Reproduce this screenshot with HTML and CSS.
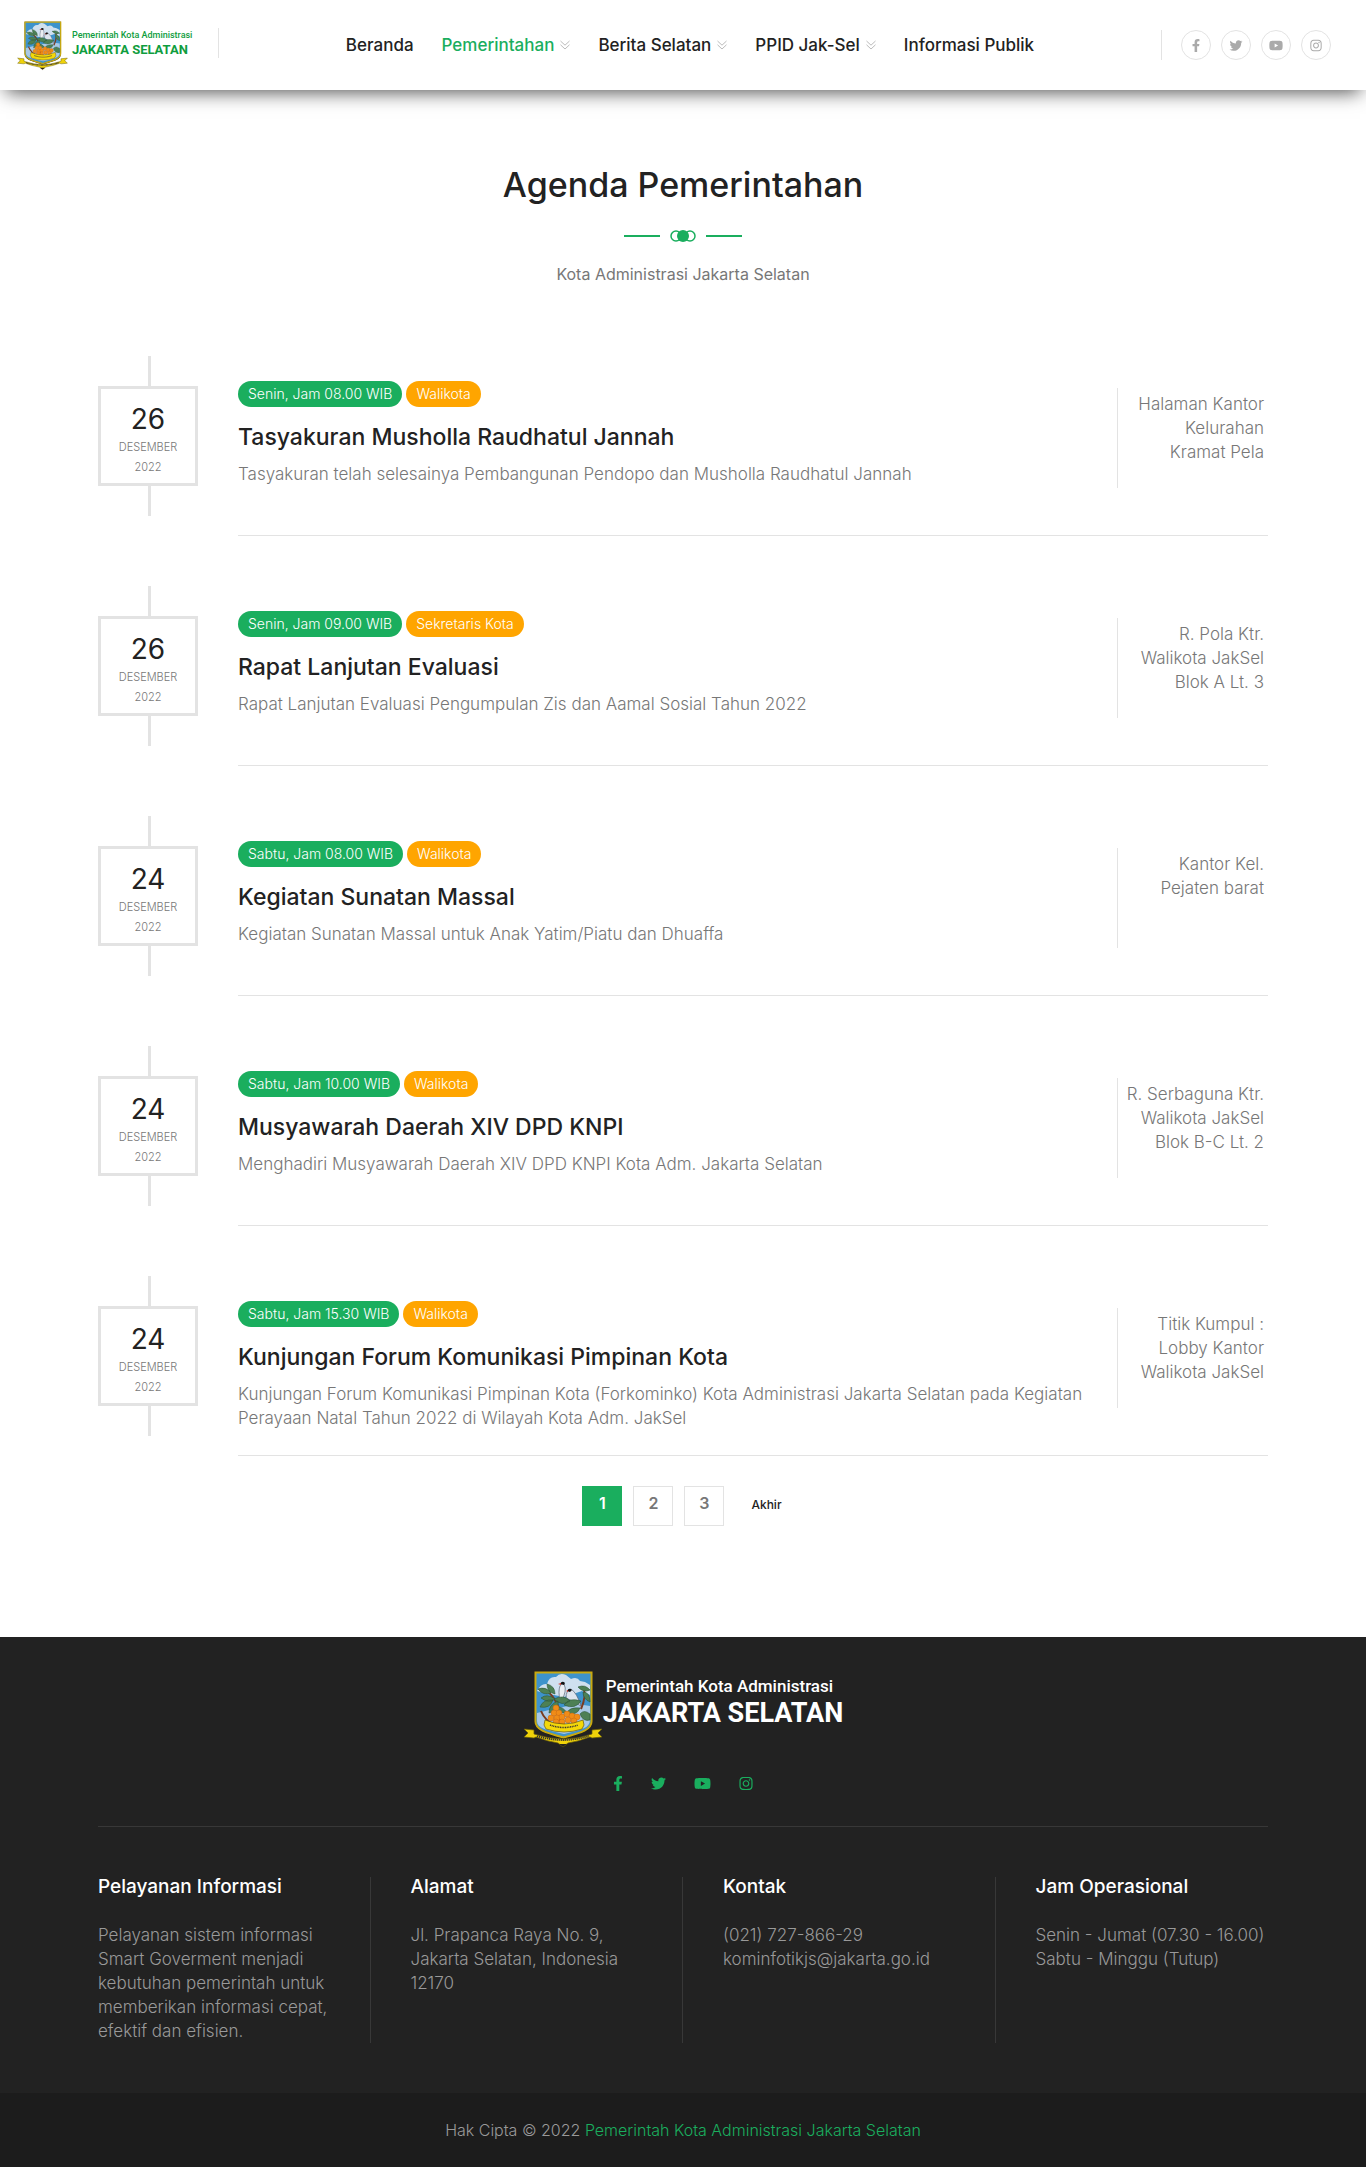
FILE: index.html
```html
<!DOCTYPE html>
<html lang="id">
<head>
<meta charset="utf-8">
<meta name="viewport" content="width=device-width, initial-scale=1">
<title>Agenda Pemerintahan - Jakarta Selatan</title>
<link rel="stylesheet" href="styles.css">
</head>
<body>
<svg class="sprite" aria-hidden="true">
  <symbol id="facebook" viewBox="0 0 320 512"><path d="M279.14 288l14.22-92.66h-88.91v-60.13c0-25.35 12.42-50.06 52.24-50.06h40.42V6.26S260.43 0 225.36 0c-73.22 0-121.08 44.38-121.08 124.72v70.62H22.89V288h81.39v224h100.17V288z"/></symbol>
  <symbol id="twitter" viewBox="0 0 512 512"><path d="M459.37 151.716c.325 4.548.325 9.097.325 13.645 0 138.72-105.583 298.558-298.558 298.558-59.452 0-114.68-17.219-161.137-47.106 8.447.974 16.568 1.299 25.34 1.299 49.055 0 94.213-16.568 130.274-44.832-46.132-.975-84.792-31.188-98.112-72.772 6.498.974 12.995 1.624 19.818 1.624 9.421 0 18.843-1.3 27.614-3.573-48.081-9.747-84.143-51.98-84.143-102.985v-1.299c13.969 7.797 30.214 12.67 47.431 13.319-28.264-18.843-46.781-51.005-46.781-87.391 0-19.492 5.197-37.36 14.294-52.954 51.655 63.675 129.3 105.258 216.365 109.807-1.624-7.797-2.599-15.918-2.599-24.04 0-57.828 46.782-104.934 104.934-104.934 30.213 0 57.502 12.67 76.67 33.137 23.715-4.548 46.456-13.32 66.599-25.34-7.798 24.366-24.366 44.833-46.132 57.827 21.117-2.273 41.584-8.122 60.426-16.243-14.292 20.791-32.161 39.308-52.628 54.253z"/></symbol>
  <symbol id="youtube" viewBox="0 0 576 512"><path d="M549.655 124.083c-6.281-23.65-24.787-42.276-48.284-48.597C458.781 64 288 64 288 64S117.22 64 74.629 75.486c-23.497 6.322-42.003 24.947-48.284 48.597-11.412 42.867-11.412 132.305-11.412 132.305s0 89.438 11.412 132.305c6.281 23.65 24.787 41.5 48.284 47.821C117.22 448 288 448 288 448s170.78 0 213.371-11.486c23.497-6.321 42.003-24.171 48.284-47.821 11.412-42.867 11.412-132.305 11.412-132.305s0-89.438-11.412-132.305zm-317.51 213.508V175.185l142.739 81.205-142.739 81.201z"/></symbol>
  <symbol id="instagram" viewBox="0 0 448 512"><path d="M224.1 141c-63.6 0-114.9 51.3-114.9 114.9s51.3 114.9 114.9 114.9S339 319.5 339 255.9 287.7 141 224.1 141zm0 189.6c-41.1 0-74.7-33.5-74.7-74.7s33.5-74.7 74.7-74.7 74.7 33.5 74.7 74.7-33.6 74.7-74.7 74.7zm146.4-194.3c0 14.9-12 26.8-26.8 26.8-14.9 0-26.8-12-26.8-26.8s12-26.8 26.8-26.8 26.8 12 26.8 26.8zm76.1 27.2c-1.7-35.9-9.9-67.7-36.2-93.9-26.2-26.2-58-34.4-93.9-36.2-37-2.1-147.9-2.1-184.9 0-35.8 1.7-67.6 9.9-93.9 36.1s-34.4 58-36.2 93.9c-2.1 37-2.1 147.9 0 184.9 1.7 35.9 9.9 67.7 36.2 93.9s58 34.4 93.9 36.2c37 2.1 147.9 2.1 184.9 0 35.9-1.7 67.7-9.9 93.9-36.2 26.2-26.2 34.4-58 36.2-93.9 2.1-37 2.1-147.8 0-184.8zM398.8 388c-7.8 19.6-22.9 34.7-42.6 42.6-29.5 11.7-99.5 9-132.1 9s-102.7 2.6-132.1-9c-19.6-7.8-34.7-22.9-42.6-42.6-11.7-29.5-9-99.5-9-132.1s-2.6-102.7 9-132.1c7.8-19.6 22.9-34.7 42.6-42.6 29.5-11.7 99.5-9 132.1-9s102.7-2.6 132.1 9c19.6 7.8 34.7 22.9 42.6 42.6 11.7 29.5 9 99.5 9 132.1s2.7 102.7-9 132.1z"/></symbol>
  <symbol id="chevrons" viewBox="0 0 10 10"><path d="M.5 1L5 5.200 9.500 1M.5 4.800L5 9l4.500-4.200" fill="none" stroke="currentColor"/></symbol>
  <symbol id="emblem" viewBox="0 0 80 78">
    <path d="M12 1h57v50c0 9-9 11-28.500 17C21 62 12 60 12 51z" fill="#111"/>
    <path d="M12.500 1.500h56v49c0 8-9 11-28 16-19-5-28-8-28-16z" fill="#3d93cc" stroke="#c9a90f" stroke-width="2"/>
    <path d="M14 20q4-8 10-7 2-8 9-7 4-5 10-2l5 4q6-3 9 2l5 1 5 3v10l-8-4-18 6-20-4z" fill="#cfe0ef"/>
    <path d="M14 42l12-3 28-6 13 2v14c0 8-9 10-26 14-18-4-27-6-27-13z" fill="#a9c9e6"/>
    <path d="M36 60q2-12 0-24M18 40q4 10 14 14M60 16q4 8-2 22M24 20q8 6 12 18" fill="none" stroke="#7a3b20" stroke-width="2"/>
    <path d="M37 30q-2-10 0-15 2-4 4-2 2 4 1 8l-3 10z" fill="#e9edf2" stroke="#576274" stroke-width=".7"/>
    <path d="M43 27q0-8 5-9 6 4 10 17-8-5-15-8z" fill="#dde4ee" stroke="#576274" stroke-width=".7"/>
    <g fill="#4d8055" stroke="#2d5738" stroke-width=".6">
      <path d="M15 18q8-3 13 4-8 3-13-4zM24 13q8 2 8 10-8-2-8-10zM17 36q3-8 13-7-3 9-13 7zM18 27q6-5 14 1-6 5-14-1zM31 28q10-5 16 2-8 6-16-2zM26 42q0-9 9-12 2 9-9 12zM41 34q5-8 17-4-6 9-17 4zM44 42q2-6 13-5-3 8-13 5zM55 16q7-3 12 3-7 3-12-3zM60 21q7 0 7 10-7-3-7-10zM33 36q7-1 11 6-8 1-11-6zM57 43q4-5 10 0v6q-7 2-10-6z"/>
    </g>
    <path d="M37 13q2-4 5-1l-1 2zM44 20q2-4 5-1l-2 2z" fill="#111"/>
    <path d="M38 12l-3 1 3 1zM45 19l-2 1 2 1z" fill="#d8382c"/>
    <g fill="#f08c17" stroke="#c96812" stroke-width=".5"><circle cx="33" cy="37" r="3"/><circle cx="31" cy="42" r="3"/><circle cx="36" cy="42" r="3"/><circle cx="28" cy="47" r="3"/><circle cx="34" cy="47" r="3"/><circle cx="39" cy="46" r="3"/><circle cx="44" cy="43" r="3"/><circle cx="49" cy="45" r="3"/><circle cx="54" cy="46" r="3"/><circle cx="45" cy="49" r="3"/><circle cx="51" cy="50" r="3"/><circle cx="39" cy="51" r="3"/><circle cx="33" cy="51" r="3"/></g>
    <path d="M22 49q19 8 38 0l1 5-2 4q-18 6-36 0l-2-4z" fill="#f3d80a" stroke="#655a08" stroke-width=".7"/>
    <path d="M27 54q14 5 28 0" fill="none" stroke="#333" stroke-dasharray="1 .7" stroke-width="1.500"/>
    <path d="M1 58l10 1v4q30 10 58 0v-4l10-1-4 4 4 4-10 1-2-1q-10 4-22 6l-5 4-5-4q-12-2-22-6l-2 1-10-1 4-4z" fill="#efd20a" stroke="#655a08" stroke-width=".7"/>
    <path d="M14 65q26 8 52 0" fill="none" stroke="#333" stroke-dasharray="1.300 .7" stroke-width="1.800"/>
    <path d="M36 73h8l-4 3z" fill="#222"/>
  </symbol>
</svg>

<header class="site-header">
  <a class="brand" href="#">
    <svg class="brand-emblem" aria-hidden="true"><use href="#emblem"/></svg>
    <span class="brand-text"><span class="brand-small">Pemerintah Kota Administrasi</span><span class="brand-big">JAKARTA SELATAN</span></span>
  </a>
  <nav class="main-nav" aria-label="Utama">
    <a href="#">Beranda</a>
    <a class="active" href="#">Pemerintahan<svg><use href="#chevrons"/></svg></a>
    <a href="#">Berita Selatan<svg><use href="#chevrons"/></svg></a>
    <a href="#">PPID Jak-Sel<svg><use href="#chevrons"/></svg></a>
    <a href="#">Informasi Publik</a>
  </nav>
  <div class="header-social">
    <a href="#" aria-label="Facebook"><svg><use href="#facebook"/></svg></a>
    <a href="#" aria-label="Twitter"><svg><use href="#twitter"/></svg></a>
    <a href="#" aria-label="YouTube"><svg><use href="#youtube"/></svg></a>
    <a href="#" aria-label="Instagram"><svg><use href="#instagram"/></svg></a>
  </div>
</header>

<main class="container">
  <section class="heading">
    <h1>Agenda Pemerintahan</h1>
    <svg class="ornament" viewBox="0 0 118 12" aria-hidden="true">
      <path d="M0 6h36M82 6h36" stroke="currentColor" stroke-width="2"/>
      <circle cx="52" cy="6" r="5" fill="none" stroke="currentColor" stroke-width="1.500"/>
      <circle cx="66" cy="6" r="5" fill="none" stroke="currentColor" stroke-width="1.500"/>
      <circle cx="59" cy="6" r="6" fill="currentColor"/>
    </svg>
    <p>Kota Administrasi Jakarta Selatan</p>
  </section>

  <section class="agenda">
    <article class="event">
      <time class="date" datetime="2022-12-26"><span class="date-box"><b>26</b><span>DESEMBER</span><span>2022</span></span></time>
      <div class="event-body">
        <div class="event-info">
          <div class="tags"><span class="tag">Senin, Jam 08.00 WIB</span><span class="tag who">Walikota</span></div>
          <h2>Tasyakuran Musholla Raudhatul Jannah</h2>
          <p>Tasyakuran telah selesainya Pembangunan Pendopo dan Musholla Raudhatul Jannah</p>
        </div>
        <p class="place">Halaman Kantor<br>Kelurahan<br>Kramat Pela</p>
      </div>
    </article>
    <article class="event">
      <time class="date" datetime="2022-12-26"><span class="date-box"><b>26</b><span>DESEMBER</span><span>2022</span></span></time>
      <div class="event-body">
        <div class="event-info">
          <div class="tags"><span class="tag">Senin, Jam 09.00 WIB</span><span class="tag who">Sekretaris Kota</span></div>
          <h2>Rapat Lanjutan Evaluasi</h2>
          <p>Rapat Lanjutan Evaluasi Pengumpulan Zis dan Aamal Sosial Tahun 2022</p>
        </div>
        <p class="place">R. Pola Ktr.<br>Walikota JakSel<br>Blok A Lt. 3</p>
      </div>
    </article>
    <article class="event">
      <time class="date" datetime="2022-12-24"><span class="date-box"><b>24</b><span>DESEMBER</span><span>2022</span></span></time>
      <div class="event-body">
        <div class="event-info">
          <div class="tags"><span class="tag">Sabtu, Jam 08.00 WIB</span><span class="tag who">Walikota</span></div>
          <h2>Kegiatan Sunatan Massal</h2>
          <p>Kegiatan Sunatan Massal untuk Anak Yatim/Piatu dan Dhuaffa</p>
        </div>
        <p class="place">Kantor Kel.<br>Pejaten barat</p>
      </div>
    </article>
    <article class="event">
      <time class="date" datetime="2022-12-24"><span class="date-box"><b>24</b><span>DESEMBER</span><span>2022</span></span></time>
      <div class="event-body">
        <div class="event-info">
          <div class="tags"><span class="tag">Sabtu, Jam 10.00 WIB</span><span class="tag who">Walikota</span></div>
          <h2>Musyawarah Daerah XIV DPD KNPI</h2>
          <p>Menghadiri Musyawarah Daerah XIV DPD KNPI Kota Adm. Jakarta Selatan</p>
        </div>
        <p class="place">R. Serbaguna Ktr.<br>Walikota JakSel<br>Blok B-C Lt. 2</p>
      </div>
    </article>
    <article class="event">
      <time class="date" datetime="2022-12-24"><span class="date-box"><b>24</b><span>DESEMBER</span><span>2022</span></span></time>
      <div class="event-body">
        <div class="event-info">
          <div class="tags"><span class="tag">Sabtu, Jam 15.30 WIB</span><span class="tag who">Walikota</span></div>
          <h2>Kunjungan Forum Komunikasi Pimpinan Kota</h2>
          <p>Kunjungan Forum Komunikasi Pimpinan Kota (Forkominko) Kota Administrasi Jakarta Selatan pada Kegiatan<br>Perayaan Natal Tahun 2022 di Wilayah Kota Adm. JakSel</p>
        </div>
        <p class="place">Titik Kumpul :<br>Lobby Kantor<br>Walikota JakSel</p>
      </div>
    </article>
  </section>

  <nav class="pagination" aria-label="Halaman">
    <a class="page current" href="#" aria-current="page">1</a>
    <a class="page" href="#">2</a>
    <a class="page" href="#">3</a>
    <a class="last" href="#">Akhir</a>
  </nav>
</main>

<footer class="site-footer">
  <div class="container">
    <div class="footer-top">
      <a class="footer-brand" href="#">
        <svg class="footer-emblem" aria-hidden="true"><use href="#emblem"/></svg>
        <span class="footer-brand-text"><span class="footer-small">Pemerintah Kota Administrasi</span><span class="footer-big">JAKARTA SELATAN</span></span>
      </a>
      <div class="footer-social">
        <a href="#" aria-label="Facebook"><svg class="fb"><use href="#facebook"/></svg></a>
        <a href="#" aria-label="Twitter"><svg class="tw"><use href="#twitter"/></svg></a>
        <a href="#" aria-label="YouTube"><svg class="yt"><use href="#youtube"/></svg></a>
        <a href="#" aria-label="Instagram"><svg class="ig"><use href="#instagram"/></svg></a>
      </div>
    </div>
    <div class="footer-columns">
      <section><h3>Pelayanan Informasi</h3><p>Pelayanan sistem informasi<br>Smart Goverment menjadi<br>kebutuhan pemerintah untuk<br>memberikan informasi cepat,<br>efektif dan efisien.</p></section>
      <section><h3>Alamat</h3><p>Jl. Prapanca Raya No. 9,<br>Jakarta Selatan, Indonesia<br>12170</p></section>
      <section><h3>Kontak</h3><p>(021) 727-866-29<br>kominfotikjs@jakarta.go.id</p></section>
      <section><h3>Jam Operasional</h3><p>Senin - Jumat (07.30 - 16.00)<br>Sabtu - Minggu (Tutup)</p></section>
    </div>
  </div>
  <p class="copyright">Hak Cipta © 2022 <a href="#">Pemerintah Kota Administrasi Jakarta Selatan</a></p>
</footer>
</body>
</html>
```
FILE: styles.css
```css
* { box-sizing: border-box; }
body {
  margin: 0;
  background: #fff;
  color: #777;
  font: 300 17px/24px Inter, "Liberation Sans", sans-serif;
}
h1, h2, h3, p { margin: 0; }
a { color: inherit; text-decoration: none; }
svg { display: block; fill: currentColor; }
.sprite { position: absolute; width: 0; height: 0; }
.container { max-width: 1170px; margin: 0 auto; }

.site-header {
  display: flex;
  align-items: center;
  justify-content: space-between;
  height: 90px;
  padding: 0 35px 0 17px;
  box-shadow: 0 8px 18px -6px rgba(0, 0, 0, .7);
}
.brand {
  display: flex;
  align-items: center;
  gap: 4px;
  width: 202px;
  height: 30px;
  margin-bottom: 4px;
  border-right: 1px solid #e3e3e3;
}
.brand-emblem { width: 51px; height: 50px; margin-top: 6px; }
.brand-text { display: flex; flex-direction: column; color: #0f9d3e; font-family: Roboto, sans-serif; white-space: nowrap; }
.brand-small { font-size: 9px; line-height: 14px; font-weight: 500; }
.brand-big { font-size: 13px; line-height: 16px; font-weight: 700; }
.main-nav { display: flex; gap: 28px; color: #222; font-weight: 500; font-size: 17px; white-space: nowrap; }
.main-nav a { display: flex; align-items: center; gap: 6px; }
.main-nav .active { color: #1aae5e; }
.main-nav svg { width: 10px; height: 10px; color: #bbb; }
.header-social { display: flex; gap: 10px; padding-left: 19px; border-left: 1px solid #e3e3e3; }
.header-social a { display: grid; place-items: center; width: 30px; height: 30px; border: 1px solid #e3e3e3; border-radius: 50%; color: #aaa; }
.header-social svg { width: 14px; height: 13px; }

.heading { display: flex; flex-direction: column; align-items: center; padding: 70px 0; }
.heading h1 { color: #222; font-size: 34px; line-height: 50px; font-weight: 500; }
.ornament { width: 118px; height: 12px; margin: 20px 0; color: #1aae5e; }
.heading p { font-size: 16px; font-weight: 400; }

.agenda { display: flex; flex-direction: column; gap: 50px; }
.event { display: flex; gap: 40px; min-height: 180px; }
.date {
  flex: none;
  width: 100px;
  height: 160px;
  padding: 30px 0;
  background: linear-gradient(#e3e3e3, #e3e3e3) 50px 0 / 3px 100% no-repeat;
}
.date-box { display: flex; flex-direction: column; align-items: center; height: 100px; padding-top: 12px; border: 3px solid #e3e3e3; background: #fff; font-size: 11px; line-height: 20px; }
.date-box b { color: #222; font-size: 28px; line-height: 36px; font-weight: 400; }
.event-body { display: flex; flex: 1; justify-content: space-between; border-bottom: 1px solid #e3e3e3; }
.event-info { padding-top: 25px; }
.tags { display: flex; gap: 4px; color: #fff; font-size: 14px; line-height: 26px; }
.tag { padding: 0 10px; border-radius: 13px; background: #1aae5e; }
.who { background: #ffa500; }
.event h2 { margin: 15px 0 10px; color: #222; font-size: 23px; line-height: 30px; font-weight: 500; }
.place { width: 151px; height: 100px; margin-top: 32px; padding: 4px 4px 0 0; border-left: 1px solid #e3e3e3; text-align: right; white-space: nowrap; }

.pagination { display: flex; justify-content: center; gap: 11px; padding: 30px 0 111px; }
.page { width: 40px; height: 40px; border: 1px solid #e3e3e3; font-size: 16px; line-height: 32px; font-weight: 600; text-align: center; }
.current { border-color: #1aae5e; background: #1aae5e; color: #fff; }
.last { padding: 0 2px 0 16px; color: #222; font-size: 12px; line-height: 38px; font-weight: 500; }

.site-footer { background: #222; color: #999; }
.footer-top { display: flex; flex-direction: column; align-items: center; gap: 26px; padding: 34px 0 35px; border-bottom: 1px solid #383838; }
.footer-brand { display: flex; color: #fff; font-family: Roboto, sans-serif; white-space: nowrap; }
.footer-emblem { width: 80px; height: 78px; }
.footer-brand-text { display: flex; flex-direction: column; padding-top: 3px; }
.footer-small { padding-left: 3px; font-size: 17px; line-height: 24px; font-weight: 500; }
.footer-big { font-size: 27px; line-height: 30px; font-weight: 700; }
.footer-social { display: flex; align-items: center; gap: 28px; height: 16px; color: #1aae5e; }
.footer-social svg { height: 15px; }
.fb { width: 10px; }
.tw { width: 15px; }
.yt { width: 17px; }
.ig { width: 14px; }
.footer-columns { display: grid; grid-template-columns: repeat(4, 1fr); margin: 0 -40px; padding: 50px 0; }
.footer-columns section { min-height: 166px; padding-left: 40px; border-right: 1px solid #383838; white-space: nowrap; }
.footer-columns section:last-child { border-right: 0; }
.footer-columns h3 { margin-bottom: 26px; color: #fff; font-size: 19px; line-height: 20px; font-weight: 500; }
.copyright { padding: 25px 0; background: #1c1c1c; font-size: 16px; text-align: center; }
.copyright a { color: #1aae5e; }
```
